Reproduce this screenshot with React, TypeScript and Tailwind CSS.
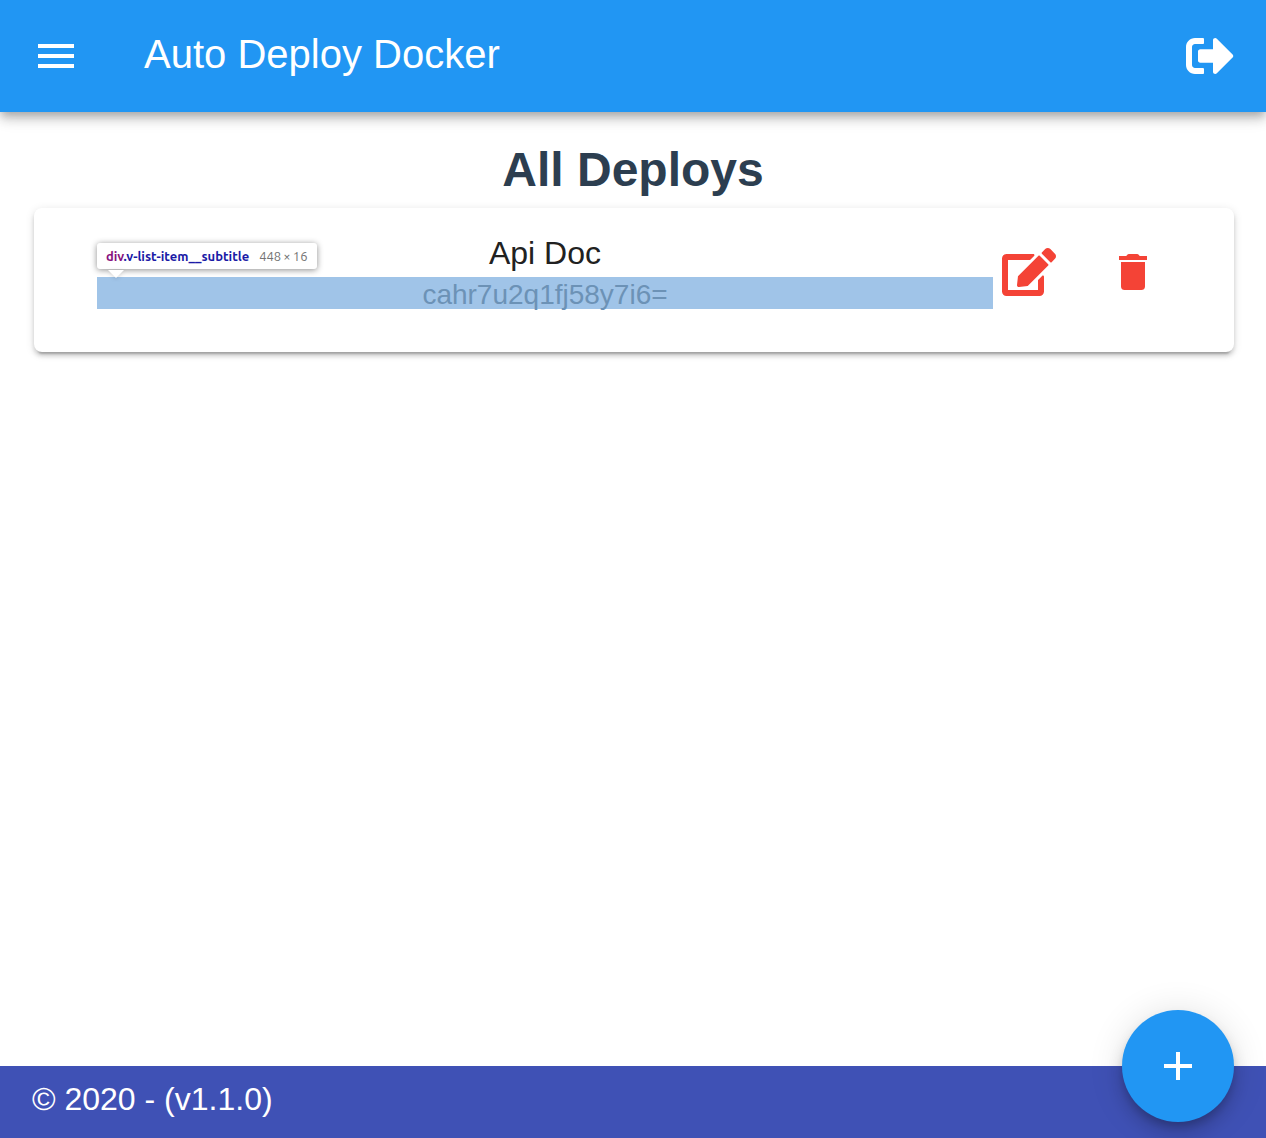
import React from "react";
import { FaEdit, FaSignOutAlt } from "react-icons/fa";

type Deploy = { name: string; token: string };

const deploys: Deploy[] = [{ name: "Api Doc", token: "cahr7u2q1fj58y7i6=" }];

function MdiIcon({ path }: { path: string }) {
  return (
    <svg viewBox="0 0 24 24" className="size-12 fill-current" aria-hidden="true">
      <path d={path} />
    </svg>
  );
}

const mdiMenu = "M3 6h18v2H3V6m0 5h18v2H3v-2m0 5h18v2H3v-2Z";
const mdiDelete =
  "M19 4h-3.5c-.4 0-.6-1-1.5-1h-4c-.9 0-1.1 1-1.5 1H5v2h14V4ZM6 19.2c0 1.1.8 1.8 1.8 1.8h8.4c1 0 1.8-.7 1.8-1.8V7H6v12.2Z";
const mdiPlus = "M19 13h-6v6h-2v-6H5v-2h6V5h2v6h6v2Z";

function AppBar() {
  return (
    <header className="flex h-28 items-center bg-[#2196f3] px-8 text-white shadow-[0_4px_8px_-2px_rgba(0,0,0,0.2),0_8px_10px_0_rgba(0,0,0,0.14),0_2px_20px_0_rgba(0,0,0,0.12)]">
      <button type="button" aria-label="Menu">
        <MdiIcon path={mdiMenu} />
      </button>
      <div className="flex-1 pb-1 pl-16 text-[40px] leading-[60px]">Auto Deploy Docker</div>
      <button type="button" aria-label="Sign out">
        <FaSignOutAlt className="size-12" />
      </button>
    </header>
  );
}

function InspectorTip() {
  return (
    <div className="absolute bottom-full left-0 mb-2 flex h-[26px] items-center gap-2.5 rounded-[3px] bg-white px-[9px] font-['Ubuntu','Noto_Sans',sans-serif] text-[13px] leading-4 whitespace-nowrap shadow-[0_1px_6px_rgba(0,0,0,0.45)]">
      <span className="font-bold text-[#1a1aa6]">
        <span className="text-[#881280]">div</span>.v-list-item__subtitle
      </span>
      <span className="text-[#737373]">448&thinsp;×&thinsp;16</span>
      <svg viewBox="0 0 16 8" className="absolute top-[27px] left-[11px] h-2 w-4 drop-shadow-sm" aria-hidden="true">
        <path d="M0 0h16L8 8Z" fill="#fff" />
      </svg>
    </div>
  );
}

function DeployCard({ deploy }: { deploy: Deploy }) {
  return (
    <li className="rounded-lg bg-white pb-4 shadow-[0_6px_2px_-4px_rgba(0,0,0,0.2),0_4px_4px_0_rgba(0,0,0,0.14),0_2px_10px_0_rgba(0,0,0,0.12)]">
      <div className="flex h-32 items-center pr-[65px] pl-[63px]">
        <div className="min-w-0 flex-1 text-center">
          <div className="mb-1.5 text-[32px] leading-9 text-[#212121]">{deploy.name}</div>
          <div className="relative h-8 bg-[#a0c4e8] text-[28px] leading-9 text-[#6c92b6]">
            {deploy.token}
            <InspectorTip />
          </div>
        </div>
        <div className="flex gap-8 text-[#f44336]">
          <button type="button" aria-label="Edit deploy" className="flex size-[72px] items-center justify-center">
            <FaEdit className="h-12 w-[54px]" />
          </button>
          <button type="button" aria-label="Delete deploy" className="flex size-[72px] items-center justify-center">
            <MdiIcon path={mdiDelete} />
          </button>
        </div>
      </div>
    </li>
  );
}

export default function App() {
  return (
    <div className="flex min-h-screen flex-col bg-white font-['Liberation_Sans',Arial,sans-serif]">
      <AppBar />
      <main className="flex-1 pt-6">
        <h1 className="mb-1 text-center text-5xl leading-[68px] font-bold text-[#2c3e50]">All Deploys</h1>
        <ul className="flex flex-col gap-4 pr-8 pl-[34px]">
          {deploys.map((d) => (
            <DeployCard key={d.token} deploy={d} />
          ))}
        </ul>
      </main>
      <footer className="flex h-[72px] items-center bg-[#3f51b5] px-8 text-[32px] leading-[48px] text-white">
        <span className="pb-1.5">© 2020 - (v1.1.0)</span>
      </footer>
      <button
        type="button"
        aria-label="Add deploy"
        className="fixed right-8 bottom-4 flex size-28 items-center justify-center rounded-full bg-[#2196f3] text-white shadow-[0_6px_10px_-2px_rgba(0,0,0,0.2),0_12px_20px_0_rgba(0,0,0,0.14),0_2px_36px_0_rgba(0,0,0,0.12)]"
      >
        <MdiIcon path={mdiPlus} />
      </button>
    </div>
  );
}
